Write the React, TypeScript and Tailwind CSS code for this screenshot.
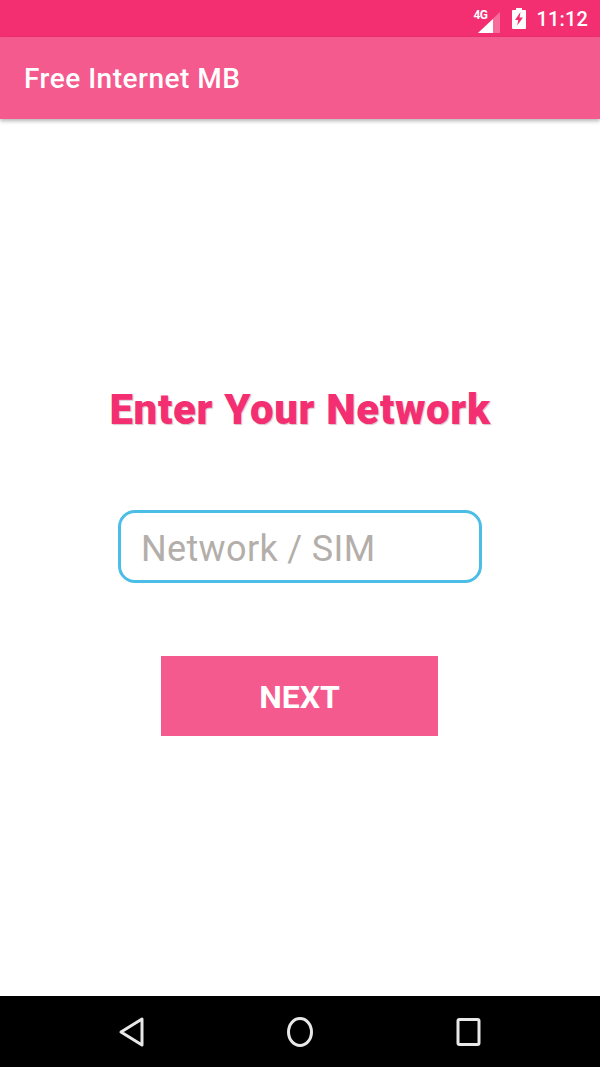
export default function App() {
  return (
    <div className="flex h-[1067px] w-[600px] flex-col overflow-hidden bg-white font-['Roboto',sans-serif]">
      {/* Status bar */}
      <div className="flex h-[37px] items-center justify-end bg-[#f32f72] pr-[12px]">
        <div className="relative mr-[12px] h-[28px] w-[26px]">
          <span className="absolute left-0 top-[3px] text-[12px] font-bold leading-[14px] tracking-[-0.6px] text-white">4G</span>
          <svg viewBox="0 0 22 21" className="absolute left-[4px] top-[7px] h-[21px] w-[22px]">
            <path d="M0 21 22 0v21z" fill="#fff" fillOpacity="0.3" />
            <path d="M0 21 15 7v14z" fill="#fff" />
          </svg>
        </div>
        <svg viewBox="0 0 14 21" className="mr-[11px] h-[21px] w-[14px]">
          <path
            fillRule="evenodd"
            d="M4 0h6v2h3a1 1 0 0 1 1 1v17a1 1 0 0 1-1 1H1a1 1 0 0 1-1-1V3a1 1 0 0 1 1-1h3zM8.5 4 3 12h3.2l-1 5.5L11 9.5H7.6z"
            fill="#fff"
          />
        </svg>
        <span className="text-[20px] font-medium leading-none tracking-[0.15px] text-white">11:12</span>
      </div>

      {/* App bar */}
      <div className="relative flex h-[82px] items-center bg-[#f45a8d] pl-[24px] shadow-[0_2px_4px_rgba(0,0,0,0.3)]">
        <span className="pt-[1px] text-[28px] font-medium leading-[34px] tracking-[0.5px] text-white">Free Internet MB</span>
      </div>

      {/* Form */}
      <main className="flex flex-1 flex-col items-center bg-white pt-[266px]">
        <h1 className="text-[42px] font-black leading-[50px] tracking-[0.65px] text-[#f32f72] [text-shadow:1px_1px_1px_rgba(120,60,80,0.3)]">Enter Your Network</h1>
        <div className="mt-[75px] flex h-[73px] w-[364px] items-center rounded-[17px] border-[3px] border-[#4bbde6] pl-[20px]">
          <span className="pt-[4px] text-[36px] leading-none tracking-[0.35px] text-[#b3aeaa]">Network / SIM</span>
        </div>
        <button className="mr-[1px] mt-[73px] h-[80px] w-[277px] bg-[#f45a8d] pt-[2px] text-[32px] font-bold text-white">NEXT</button>
      </main>

      {/* Navigation bar */}
      <div className="flex h-[71px] items-center justify-between bg-black px-[117px]">
        <svg viewBox="0 0 28 32" className="h-[32px] w-[28px]">
          <path d="M25 3v26L4 16z" fill="none" stroke="#e8e8e8" strokeWidth="3" strokeLinejoin="round" />
        </svg>
        <svg viewBox="0 0 28 32" className="h-[32px] w-[28px]">
          <ellipse cx="14" cy="16" rx="11.5" ry="13.5" fill="none" stroke="#e8e8e8" strokeWidth="3" />
        </svg>
        <svg viewBox="0 0 28 32" className="h-[32px] w-[28px]">
          <rect x="3" y="3.5" width="21" height="25" rx="1.5" fill="none" stroke="#e8e8e8" strokeWidth="3" />
        </svg>
      </div>
    </div>
  );
}
